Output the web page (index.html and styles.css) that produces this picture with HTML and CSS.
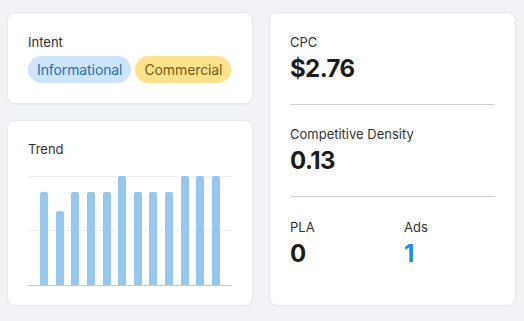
FILE: index.html
```html
<!DOCTYPE html>
<html>
<head>
<meta charset="utf-8">
<link rel="stylesheet" href="styles.css">
</head>
<body>
<div class="grid">
  <div class="col">
    <div class="card intent-card">
      <div class="label">Intent</div>
      <div class="pills">
        <span class="pill pill-info">Informational</span>
        <span class="pill pill-com">Commercial</span>
      </div>
    </div>
    <div class="card trend-card">
      <div class="label">Trend</div>
      <div class="chart">
        <div class="grid-line top"></div>
        <div class="grid-line mid"></div>
        <div class="bars">
          <div class="bar" style="height:85%"></div>
          <div class="bar" style="height:68%"></div>
          <div class="bar" style="height:85%"></div>
          <div class="bar" style="height:85%"></div>
          <div class="bar" style="height:85%"></div>
          <div class="bar" style="height:100%"></div>
          <div class="bar" style="height:85%"></div>
          <div class="bar" style="height:85%"></div>
          <div class="bar" style="height:85%"></div>
          <div class="bar" style="height:100%"></div>
          <div class="bar" style="height:100%"></div>
          <div class="bar" style="height:100%"></div>
        </div>
      </div>
    </div>
  </div>
  <div class="card metrics-card">
    <div class="section">
      <div class="label">CPC</div>
      <div class="value">$2.76</div>
    </div>
    <div class="section">
      <div class="label">Competitive Density</div>
      <div class="value">0.13</div>
    </div>
    <div class="section split">
      <div class="half">
        <div class="label">PLA</div>
        <div class="value">0</div>
      </div>
      <div class="half">
        <div class="label">Ads</div>
        <div class="value blue">1</div>
      </div>
    </div>
  </div>
</div>
</body>
</html>
```
FILE: styles.css
```css
* { box-sizing: border-box; }
html, body { margin: 0; }
body {
  background: #f1f3f7;
  font-family: Inter, "Noto Sans", sans-serif;
  color: #333;
  padding: 12px 8px 0 7px;
}
.grid {
  display: grid;
  grid-template-columns: 246px 247px;
  column-gap: 16px;
}
.col {
  display: flex;
  flex-direction: column;
  gap: 16px;
}
.card {
  background: #fff;
  border: 1px solid #e6e8ec;
  border-radius: 8px;
  box-shadow: 0 1px 2px rgba(0,0,0,0.04);
  padding: 20px;
}
.label {
  font-size: 13px;
  line-height: 18px;
  color: #333;
}
.pills {
  display: flex;
  gap: 4px;
  margin-top: 5px;
}
.pill {
  height: 27px;
  line-height: 27px;
  padding: 0 9px;
  border-radius: 14px;
  font-size: 14px;
  letter-spacing: -0.1px;
}
.pill-info { background: #cde5fb; color: #2a6eb4; }
.pill-com { background: #fde28e; color: #7a5a14; }
.trend-card { height: 186px; padding-top: 19px; }
.chart {
  position: relative;
  margin-top: 18px;
  height: 110px;
  border-bottom: 1px solid #c8c8c8;
}
.grid-line {
  position: absolute;
  left: 0; right: 0;
  height: 1px;
  background: #eeeeee;
}
.grid-line.top { top: 0; }
.grid-line.mid { top: 54px; }
.bars {
  position: relative;
  height: 109px;
  padding: 0 12px;
  display: flex;
  justify-content: space-between;
  align-items: flex-end;
}
.bar {
  width: 8px;
  background: #94c8ee;
  border-radius: 2px 2px 0 0;
}
.metrics-card { padding: 0 20px; }
.section {
  padding: 20px 0;
  border-bottom: 1px solid #cfcfcf;
}
.section:last-child { border-bottom: none; padding-top: 21px; }
.value {
  font-size: 24px;
  line-height: 30px;
  font-weight: 700;
  letter-spacing: -0.6px;
  color: #1c1c1c;
  margin-top: 3px;
}
.value.blue { color: #1a8ce0; }
.split { display: flex; }
.half { flex: 0 0 114px; }
```
